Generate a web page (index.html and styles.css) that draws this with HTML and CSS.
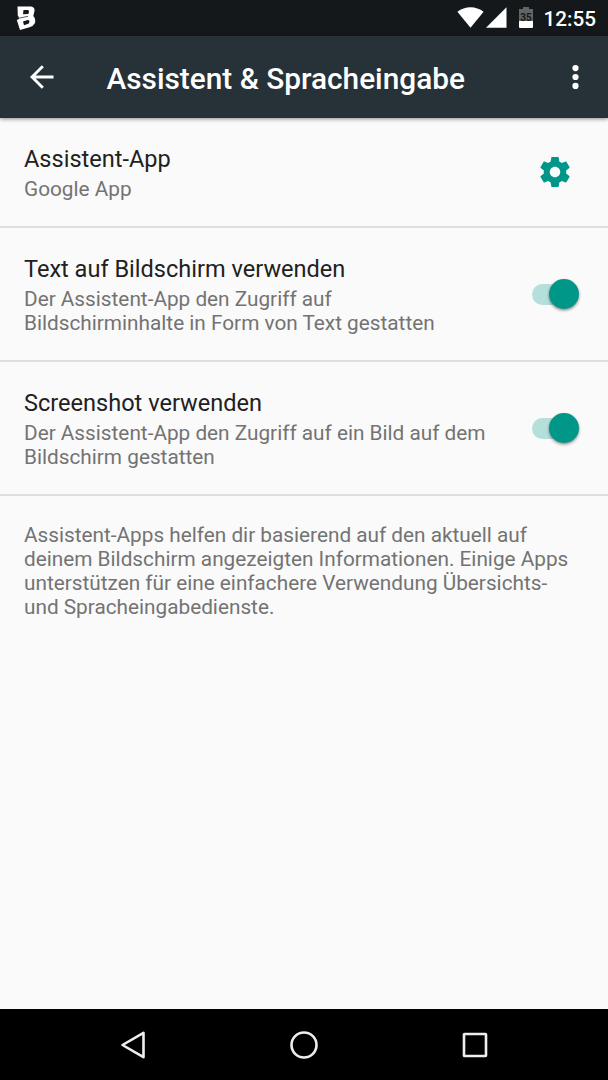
FILE: index.html
```html
<!DOCTYPE html>
<html lang="de">

<head>
  <meta charset="UTF-8">
  <meta name="viewport" content="width=device-width, initial-scale=1.0">
  <title>Assistent &amp; Spracheingabe</title>
  <link rel="stylesheet" href="styles.css">
</head>

<body>
  <div class="status-bar">
    <svg class="ico-app" width="20" height="26" viewBox="0 0 20 26">
      <path fill="#fff" fill-rule="evenodd" d="M1.500 1.500 L15 1.500 Q19 2 18.500 6 L17.300 11 Q20 14 19 18 Q17.500 21 13.500 22.300 L4 25 L0.800 15 L3 14 L2.500 11.500 L1.800 10.800 Z M7.500 5 L7 9.300 L12.300 9 Q13.800 5.300 11.800 5 Z M7 16.500 L8 20.200 L12.800 18.500 Q14.500 15 11.800 15 Z" />
      <path d="M2 13.400 L12 11.300" stroke="#14181b" stroke-width="0.700" />
    </svg>
    <div class="status-icons">
      <svg class="ico-wifi" width="27" height="21" viewBox="0 0 27 21">
        <path fill="#fff" d="M13.500 20.800 L0.400 4.800 C8 -1.300 19 -1.300 26.600 4.800 Z" />
      </svg>
      <svg class="ico-signal" width="21" height="21" viewBox="0 0 21 21">
        <path fill="#fff" d="M0 20.800 L20.500 0.300 V20.800 Z" />
      </svg>
      <svg class="ico-battery" width="14" height="21" viewBox="0 0 14 21">
        <path fill="#626466" d="M4 0 H10 V2 H14 V14 H0 V2 H4 Z" />
        <path fill="#fff" d="M0 14 H14 V20 Q14 21 13 21 H1 Q0 21 0 20 Z" />
        <text class="battery-num" x="7" y="14" text-anchor="middle">35</text>
      </svg>
      <span class="clock">12:55</span>
    </div>
  </div>

  <header class="toolbar">
    <button type="button" class="btn-back" aria-label="Zurück">
      <svg width="24" height="24" viewBox="0 0 24 24" fill="none" stroke="#fff" stroke-width="2.900">
        <path d="M23.500 12 H2.500 M12.800 1.200 L2 12 L12.800 22.800" />
      </svg>
    </button>
    <h1 class="title">Assistent &amp; Spracheingabe</h1>
    <button type="button" class="btn-more" aria-label="Mehr">
      <svg width="7" height="24" viewBox="0 0 7 24" fill="#fff">
        <circle cx="3.500" cy="3.100" r="3.100" />
        <circle cx="3.500" cy="12" r="3.100" />
        <circle cx="3.500" cy="20.900" r="3.100" />
      </svg>
    </button>
  </header>

  <main class="content">
    <ul class="list">
      <li class="item">
        <div class="item-text">
          <h2>Assistent-App</h2>
          <p>Google App</p>
        </div>
        <svg class="ico-gear" width="36" height="36" viewBox="0 0 24 24">
          <path fill="#009688" d="M19.430 12.980c.040-.320.070-.640.070-.980s-.030-.660-.070-.980l2.110-1.650c.190-.150.240-.420.120-.640l-2-3.460c-.120-.220-.390-.300-.610-.220l-2.490 1c-.520-.400-1.080-.730-1.690-.980l-.380-2.650C14.460 2.180 14.250 2 14 2h-4c-.250 0-.460.180-.490.420l-.380 2.650c-.610.250-1.170.590-1.690.980l-2.490-1c-.230-.090-.490 0-.610.220l-2 3.460c-.130.220-.070.490.120.640l2.110 1.650c-.040.320-.070.650-.070.980s.030.660.070.980l-2.110 1.650c-.190.150-.240.420-.120.640l2 3.460c.120.220.390.300.610.220l2.490-1c.520.400 1.080.730 1.690.980l.380 2.650c.030.240.240.420.490.420h4c.250 0 .460-.180.490-.420l.380-2.650c.610-.250 1.170-.590 1.690-.980l2.490 1c.230.090.490 0 .610-.220l2-3.460c.120-.220.070-.490-.120-.640l-2.110-1.650zM12 15.500c-1.930 0-3.500-1.570-3.500-3.500s1.570-3.500 3.500-3.500 3.500 1.570 3.500 3.500-1.570 3.500-3.500 3.500z" />
        </svg>
      </li>
      <li class="item">
        <div class="item-text">
          <h2>Text auf Bildschirm verwenden</h2>
          <p>Der Assistent-App den Zugriff auf<br>Bildschirminhalte in Form von Text gestatten</p>
        </div>
        <button type="button" class="switch" aria-label="Text auf Bildschirm verwenden"></button>
      </li>
      <li class="item">
        <div class="item-text">
          <h2>Screenshot verwenden</h2>
          <p>Der Assistent-App den Zugriff auf ein Bild auf dem<br>Bildschirm gestatten</p>
        </div>
        <button type="button" class="switch" aria-label="Screenshot verwenden"></button>
      </li>
    </ul>
    <p class="info">Assistent-Apps helfen dir basierend auf den aktuell auf<br>deinem Bildschirm angezeigten Informationen. Einige Apps<br>unterstützen für eine einfachere Verwendung Übersichts-<br>und Spracheingabedienste.</p>
  </main>

  <nav class="nav-bar">
    <svg width="28" height="30" viewBox="0 0 28 30">
      <path d="M24.500 2.800 V27.200 L3.500 15 Z" />
    </svg>
    <svg width="28" height="30" viewBox="0 0 28 30">
      <circle cx="14" cy="15" r="12.500" />
    </svg>
    <svg width="28" height="30" viewBox="0 0 28 30">
      <rect x="3" y="4" width="22" height="22" rx="0.500" />
    </svg>
  </nav>
</body>

</html>
```
FILE: styles.css
```css
* {
  box-sizing: border-box;
}

body,
h1,
h2,
p,
ul {
  margin: 0;
  padding: 0;
}

body {
  display: flex;
  flex-direction: column;
  height: 1080px;
  background: #fafafa;
  font-family: Roboto, sans-serif;
  overflow: hidden;
}

li {
  list-style: none;
}

svg {
  display: block;
  flex: none;
}

button {
  display: block;
  padding: 0;
  border: none;
  background: none;
  cursor: pointer;
}

/* status bar */
.status-bar {
  display: flex;
  justify-content: space-between;
  flex: none;
  height: 35.5px;
  padding: 0 12px 0 16px;
  background: #14181b;
}

.ico-app {
  margin-top: 5px;
}

.status-icons {
  display: flex;
  align-items: flex-start;
  padding-top: 7px;
}

.ico-signal {
  margin-left: 2px;
}

.ico-battery {
  margin-left: 12px;
}

.battery-num {
  font-size: 10px;
  font-weight: 700;
  fill: #14181b;
}

.clock {
  margin-left: 11px;
  color: #fff;
  font-size: 20.7px;
  font-weight: 500;
  line-height: 24px;
}

/* toolbar */
.toolbar {
  display: flex;
  align-items: center;
  flex: none;
  height: 82.5px;
  padding: 0 29px 0 29.5px;
  background: #263238;
  box-shadow: 0 1px 4px rgba(0, 0, 0, 0.45);
  z-index: 1;
}

.title {
  flex: 1;
  margin-left: 53px;
  padding-top: 3px;
  color: #fff;
  font-size: 29.8px;
  font-weight: 500;
  line-height: 35px;
}

/* settings */
.content {
  flex: 1;
}

.item {
  display: flex;
  align-items: center;
  justify-content: space-between;
  height: 134px;
  padding: 0 28.6px 0 24px;
  border-bottom: 2px solid #dedede;
}

.item:first-child {
  height: 110px;
  padding-right: 35px;
}

.item-text {
  padding-top: 2px;
}

.item h2 {
  margin-bottom: 4px;
  color: #212121;
  font-size: 23.55px;
  font-weight: 400;
  line-height: 28px;
}

.item p,
.info {
  color: #737373;
  font-size: 20.77px;
  line-height: 24.2px;
}

.switch {
  position: relative;
  width: 47px;
  height: 30px;
}

.switch::before {
  content: "";
  position: absolute;
  top: 4.5px;
  left: 0;
  width: 41px;
  height: 21px;
  border-radius: 11px;
  background: #b5dfdb;
}

.switch::after {
  content: "";
  position: absolute;
  top: 0;
  right: 0;
  width: 30px;
  height: 30px;
  border-radius: 50%;
  background: #009688;
  box-shadow: 0 1.5px 3px rgba(0, 0, 0, 0.45);
}

.info {
  padding: 26.6px 24px 0;
}

/* navigation */
.nav-bar {
  display: flex;
  align-items: center;
  justify-content: space-between;
  flex: none;
  height: 71px;
  padding: 0 119px;
  background: #000;
}

.nav-bar svg {
  fill: none;
  stroke: #eee;
  stroke-width: 2.6;
  stroke-linejoin: round;
}
```
